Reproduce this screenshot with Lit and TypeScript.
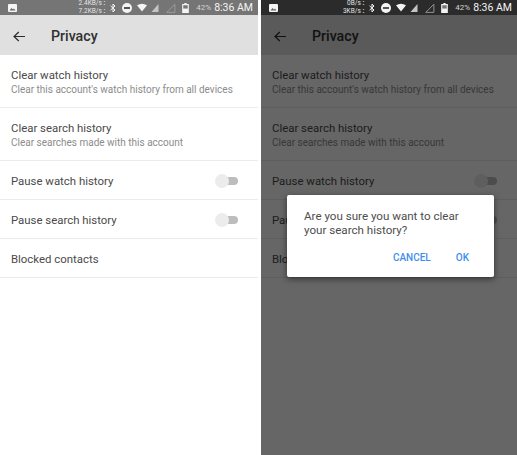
import { LitElement, css, html, svg } from "lit";
import { customElement, property } from "lit/decorators.js";

const back = svg`<path d="M12 5.500H1.200M5.800 1 1 5.500 5.800 10" fill="none" stroke="currentColor" stroke-width="1.200"/>`;

@customElement("privacy-phone")
class PrivacyPhone extends LitElement {
  @property({ type: Boolean, reflect: true }) dialog = false;
  @property() up = "2.4KB/s";
  @property() down = "7.2KB/s";

  static styles = css`
    :host {
      display: block;
      position: relative;
      height: 455px;
      background: #fff;
      font-family: Roboto, "Liberation Sans", sans-serif;
      overflow: hidden;
    }
    .status {
      display: flex;
      align-items: center;
      height: 15px;
      padding: 0 5px 0 8px;
      background: #757575;
      color: #f4f4f4;
    }
    :host([dialog]) .status {
      position: relative;
      z-index: 2;
      background: #2b2b2b;
    }
    .pic { width: 9px; height: 8px; margin-right: auto; }
    .speed {
      font-size: 6.500px;
      line-height: 7.500px;
      text-align: right;
      margin-right: 5px;
      color: #e4e4e4;
      white-space: nowrap;
    }
    .icons { display: flex; align-items: center; gap: 5px; }
    .icons .dnd { margin-left: 1px; }
    .icons .wifi { margin-right: -1px; }
    .icons .empty { margin-left: 1px; }
    .icons .battery { margin-left: 1px; }
    .pct { font-size: 8px; margin-left: 7px; color: #d4d4d4; }
    .time { font-size: 10.500px; margin-left: 3px; white-space: nowrap; }
    .bar {
      display: flex;
      align-items: center;
      height: 40px;
      padding-top: 2px;
      box-sizing: border-box;
      background: #e0e0e0;
      color: #2a2a2a;
    }
    .bar svg { width: 13px; height: 11px; margin-left: 13px; }
    .bar h1 {
      margin: 0 0 0 25px;
      font-size: 14.200px;
      font-weight: 500;
      color: #303030;
    }
    .row {
      display: flex;
      flex-direction: column;
      justify-content: center;
      padding: 2px 10px 0 11px;
      border-bottom: 1px solid #ececec;
      box-sizing: border-box;
      height: 39px;
      position: relative;
    }
    .row.two { height: 53px; }
    .title { font-size: 11.400px; line-height: 15px; color: #4a4a4a; }
    .sub { font-size: 10px; line-height: 13px; color: #8c8c8c; white-space: nowrap; }
    .switch {
      position: absolute;
      right: 20px;
      top: 16px;
      width: 19px;
      height: 8px;
      border-radius: 4px;
      background: #bdbdbd;
    }
    .switch::before {
      content: "";
      position: absolute;
      left: -4px;
      top: -3px;
      width: 14px;
      height: 14px;
      border-radius: 50%;
      background: #ececec;
    }
    .scrim {
      position: absolute;
      inset: 0;
      background: rgba(0, 0, 0, 0.6);
    }
    .dialog {
      position: absolute;
      left: 26px;
      top: 195px;
      width: 207px;
      height: 82px;
      box-sizing: border-box;
      padding: 15px 25px 0 17px;
      background: #fff;
      border-radius: 2px;
      box-shadow: 0 2px 6px rgba(0, 0, 0, 0.5);
    }
    .dialog p {
      margin: 0;
      font-size: 11.600px;
      line-height: 13.500px;
      color: #4d4d4d;
    }
    .actions {
      display: flex;
      justify-content: flex-end;
      gap: 25px;
      margin-top: 15px;
      font-size: 10px;
      font-weight: 500;
      color: #3f8ef0;
    }
  `;

  render() {
    return html`
      <div class="status">
        <svg class="pic" viewBox="0 0 9 8">
          <rect width="9" height="8" rx="1" fill="currentColor" />
          <path d="M1.500 6.500 3.500 4l1.500 1.500L6 4.600l1.500 1.900z" fill="#666" />
        </svg>
        <div class="speed">${this.up} <b>:</b><br />${this.down} <b>:</b></div>
        <div class="icons">
          <svg width="6" height="10" viewBox="0 0 6 10">
            <path d="M.5 2.800 5 7 3 9V1l2 2-4.500 4.200" fill="none" stroke="currentColor" />
          </svg>
          <svg class="dnd" width="10" height="10" viewBox="0 0 10 10">
            <circle cx="5" cy="5" r="5" fill="currentColor" />
            <rect x="2" y="4" width="6" height="2" fill="#555" />
          </svg>
          <svg class="wifi" width="10" height="9" viewBox="0 0 11 9">
            <path d="M0 2Q5.500-1.500 11 2L5.500 9z" fill="currentColor" />
          </svg>
          <svg width="8" height="8" viewBox="0 0 7 8">
            <path d="M7 0v8H0z" fill="#c4c4c4" />
          </svg>
          <svg class="empty" width="11" height="10" viewBox="0 0 8 8">
            <path d="M7.500 1v6.500H1z" fill="none" stroke="#a0a0a0" stroke-width=".7" />
          </svg>
          <svg class="battery" width="7" height="10" viewBox="0 0 6 9">
            <path d="M2 0h2v1h2v8H0V1h2z" fill="currentColor" />
            <rect x="1" y="2" width="4" height="3" fill="#777" />
          </svg>
        </div>
        <span class="pct">42%</span>
        <span class="time">8:36 AM</span>
      </div>
      <div class="bar">
        <svg viewBox="0 0 13 11">${back}</svg>
        <h1>Privacy</h1>
      </div>
      <div class="row two">
        <div class="title">Clear watch history</div>
        <div class="sub">Clear this account's watch history from all devices</div>
      </div>
      <div class="row two">
        <div class="title">Clear search history</div>
        <div class="sub">Clear searches made with this account</div>
      </div>
      <div class="row">
        <div class="title">Pause watch history</div>
        <div class="switch"></div>
      </div>
      <div class="row">
        <div class="title">Pause search history</div>
        <div class="switch"></div>
      </div>
      <div class="row">
        <div class="title">Blocked contacts</div>
      </div>
      ${this.dialog
        ? html`<div class="scrim"></div>
            <div class="dialog">
              <p>Are you sure you want to clear your search history?</p>
              <div class="actions"><span>CANCEL</span><span>OK</span></div>
            </div>`
        : ""}
    `;
  }
}

@customElement("app-root")
class AppRoot extends LitElement {
  static styles = css`
    :host {
      display: grid;
      grid-template-columns: 258px 256px;
      justify-content: space-between;
      width: 517px;
      height: 455px;
      background: #fff;
    }
  `;

  render() {
    return html`
      <privacy-phone></privacy-phone>
      <privacy-phone dialog up="0B/s" down="3KB/s"></privacy-phone>
    `;
  }
}
